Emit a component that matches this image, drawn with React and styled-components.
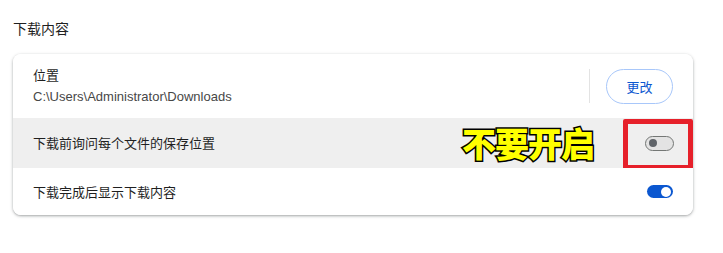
import React from 'react';
import styled, { createGlobalStyle } from 'styled-components';

const GlobalStyle = createGlobalStyle`
  body {
    margin: 0;
    background: #ffffff;
    font-family: "Noto Sans", "Noto Sans CJK SC", sans-serif;
    color: #1f1f1f;
  }
`;

const Page = styled.div`
  width: 723px;
  height: 253px;
  padding: 18px 30px 0 13px;
  box-sizing: border-box;
`;

const Heading = styled.h2`
  margin: 0;
  font-size: 14px;
  font-weight: 400;
  line-height: 20px;
  color: #1f1f1f;
  font-family: "Noto Sans CJK SC", sans-serif;
`;

const Card = styled.div`
  margin-top: 16px;
  width: 680px;
  background: #fff;
  border-radius: 8px;
  box-shadow: 0 1px 2px rgba(60, 64, 67, 0.3), 0 1px 3px 1px rgba(60, 64, 67, 0.15);
  overflow: hidden;
`;

const Row = styled.div`
  position: relative;
  display: flex;
  align-items: center;
  height: ${p => p.$h}px;
  padding: 0 ${p => p.$pr || 20}px 0 20px;
  background: ${p => (p.$hover ? '#efefef' : '#fff')};
  box-sizing: border-box;
`;

const Label = styled.div`
  flex: 1;
  font-size: 13px;
  line-height: 22px;
  color: #1f1f1f;
  font-family: "Noto Sans CJK SC", sans-serif;
`;

const SubLabel = styled.div`
  font-size: 13px;
  line-height: 22px;
  color: #474747;
  font-family: "Liberation Sans", "Noto Sans CJK SC", sans-serif;
`;

const Separator = styled.div`
  width: 1px;
  height: 34px;
  background: #e3e3e3;
  margin-right: 16px;
`;

const OutlineButton = styled.button`
  width: 67px;
  height: 35px;
  border: 1px solid #a8c7fa;
  border-radius: 18px;
  background: #fff;
  color: #0b57d0;
  font-size: 13px;
  font-family: "Noto Sans CJK SC", sans-serif;
  padding: 0;
  cursor: pointer;
`;

const Track = styled.div`
  position: relative;
  width: ${p => (p.$on ? 26 : 29)}px;
  height: ${p => (p.$on ? 13 : 15)}px;
  border-radius: 8px;
  box-sizing: border-box;
  background: ${p => (p.$on ? '#0b57d0' : '#e3e3e3')};
  border: ${p => (p.$on ? 'none' : '1px solid #747775')};
  display: flex;
  align-items: center;
  justify-content: ${p => (p.$on ? 'flex-end' : 'flex-start')};
  padding: 0 ${p => (p.$on ? 2 : 3)}px;
`;

const Knob = styled.div`
  width: ${p => (p.$on ? 10 : 8)}px;
  height: ${p => (p.$on ? 10 : 8)}px;
  border-radius: 50%;
  background: ${p => (p.$on ? '#fff' : '#5f6368')};
`;

const Callout = styled.div`
  position: absolute;
  left: 449px;
  top: 6px;
  font-size: 34px;
  line-height: 38px;
  font-weight: 900;
  color: #ffff00;
  -webkit-text-stroke: 3px #000;
  paint-order: stroke fill;
  font-family: "Noto Sans CJK SC", sans-serif;
  letter-spacing: -1px;
`;

const RedBox = styled.div`
  position: absolute;
  left: 610px;
  top: 1px;
  width: 70px;
  height: 51px;
  border: 5px solid #e6202a;
  border-radius: 2px;
  box-sizing: border-box;
`;

function Toggle({ on }) {
  return (
    <Track $on={on}>
      <Knob $on={on} />
    </Track>
  );
}

export default function App() {
  return (
    <>
      <GlobalStyle />
      <Page>
        <Heading>下载内容</Heading>
        <Card>
          <Row $h={64}>
            <Label>
              位置
              <SubLabel>C:\Users\Administrator\Downloads</SubLabel>
            </Label>
            <Separator />
            <OutlineButton>更改</OutlineButton>
          </Row>
          <Row $h={50} $hover $pr={19}>
            <Label>下载前询问每个文件的保存位置</Label>
            <Toggle on={false} />
            <Callout>不要开启</Callout>
            <RedBox />
          </Row>
          <Row $h={47}>
            <Label>下载完成后显示下载内容</Label>
            <Toggle on />
          </Row>
        </Card>
      </Page>
    </>
  );
}
